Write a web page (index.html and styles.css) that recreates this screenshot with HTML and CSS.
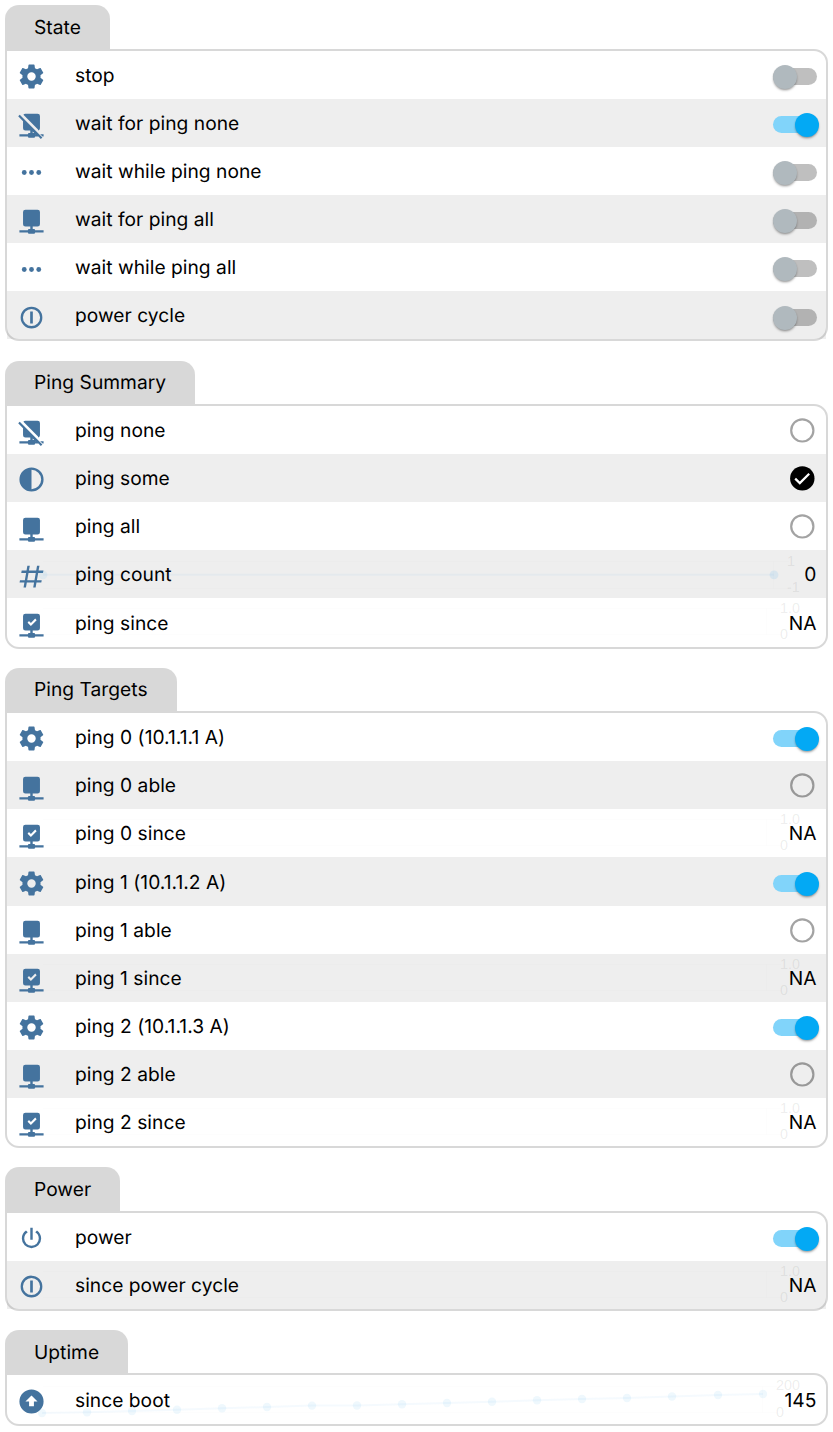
FILE: index.html
```html
<!DOCTYPE html>
<html lang="en">
<head>
<meta charset="utf-8">
<title>Ping monitor</title>
<link rel="stylesheet" href="styles.css">
</head>
<body>
<svg class="defs" aria-hidden="true">
  <symbol id="cog" viewBox="0 0 24 24"><path d="M12 15.5A3.5 3.5 0 0 1 8.5 12 3.5 3.5 0 0 1 12 8.5a3.5 3.5 0 0 1 3.5 3.5 3.5 3.5 0 0 1-3.5 3.5m7.43-2.53c.04-.32.07-.64.07-.97s-.03-.66-.07-1l2.11-1.63c.19-.15.24-.42.12-.64l-2-3.46c-.12-.22-.39-.31-.61-.22l-2.49 1c-.52-.39-1.06-.73-1.69-.98l-.37-2.65A.506.506 0 0 0 14 2h-4c-.25 0-.46.18-.5.42l-.37 2.65c-.63.25-1.17.59-1.69.98l-2.49-1c-.22-.09-.49 0-.61.22l-2 3.46c-.13.22-.07.49.12.64L4.57 11c-.04.34-.07.67-.07 1s.03.65.07.97l-2.11 1.66c-.19.15-.25.42-.12.64l2 3.46c.12.22.39.3.61.22l2.49-1.01c.52.4 1.06.74 1.69.99l.37 2.65c.04.24.25.42.5.42h4c.25 0 .46-.18.5-.42l.37-2.65c.63-.26 1.17-.59 1.69-.99l2.49 1.01c.22.08.49 0 .61-.22l2-3.46c.12-.22.07-.49-.12-.64z"/></symbol>
  <symbol id="net" viewBox="0 0 24 24"><path d="M17 3a2 2 0 0 1 2 2v10a2 2 0 0 1-2 2h-4v2h1a1 1 0 0 1 1 1h7v2h-7a1 1 0 0 1-1 1h-4a1 1 0 0 1-1-1H2v-2h7a1 1 0 0 1 1-1h1v-2H7a2 2 0 0 1-2-2V5a2 2 0 0 1 2-2z"/></symbol>
  <symbol id="net-check" viewBox="0 0 24 24"><path d="M17 3a2 2 0 0 1 2 2v10a2 2 0 0 1-2 2h-4v2h1a1 1 0 0 1 1 1h7v2h-7a1 1 0 0 1-1 1h-4a1 1 0 0 1-1-1H2v-2h7a1 1 0 0 1 1-1h1v-2H7a2 2 0 0 1-2-2V5a2 2 0 0 1 2-2zm-5.5 10.25 4.75-4.75-1.16-1.41-3.59 3.58-1.59-1.58L8.75 10.5z"/></symbol>
  <symbol id="net-off" viewBox="0 0 24 24"><path d="M1 5.27 5 9.23V15a2 2 0 0 0 2 2h4v2h-1a1 1 0 0 0-1 1H2v2h7a1 1 0 0 0 1 1h4a1 1 0 0 0 1-1h2.73l2 2L21 22.72 2.28 4zM15 20a1 1 0 0 0-1-1h-1v-1.27L15.27 20zm7 0v2h-.82l-2-2zM17.4 16.96A2 2 0 0 0 19 15V5a2 2 0 0 0-2-2H7a2 2 0 0 0-1.7.95L17.4 16.1z"/></symbol>
  <symbol id="dots" viewBox="0 0 24 24"><circle cx="6" cy="12" r="2"/><circle cx="12" cy="12" r="2"/><circle cx="18" cy="12" r="2"/></symbol>
  <symbol id="cycle" viewBox="0 0 24 24"><path d="M12 3a9 9 0 1 0 0 18 9 9 0 0 0 0-18m0 1.9a7.1 7.1 0 1 1 0 14.2 7.1 7.1 0 0 1 0-14.2M10.900 7v10h2.200V7z"/></symbol>
  <symbol id="half" viewBox="0 0 24 24"><path d="M12 2a10 10 0 1 0 0 20 10 10 0 0 0 0-20m0 2a8 8 0 0 1 0 16z"/></symbol>
  <symbol id="pound" viewBox="0 0 24 24"><path d="m5.41 21 .71-4h-4l.35-2h4l1.06-6h-4l.35-2h4l.71-4h2l-.71 4h6l.71-4h2l-.71 4h4l-.35 2h-4l-1.06 6h4l-.35 2h-4l-.71 4h-2l.71-4h-6l-.71 4zM9.53 9l-1.06 6h6l1.06-6z"/></symbol>
  <symbol id="power" viewBox="0 0 24 24"><path d="m16.56 5.44-1.45 1.45A5.97 5.97 0 0 1 18 12a6 6 0 0 1-12 0c0-2.17 1.16-4.06 2.88-5.12L7.44 5.44A7.96 7.96 0 0 0 4 12a8 8 0 0 0 16 0c0-2.72-1.36-5.12-3.44-6.56M13 3h-2v10h2z"/></symbol>
  <symbol id="up" viewBox="0 0 24 24"><path d="M2 12a10 10 0 1 1 20 0 10 10 0 0 1-20 0m8 4h4v-4h3l-5-5-5 5h3z"/></symbol>
  <symbol id="off" viewBox="0 0 26 26"><circle cx="13.3" cy="13.4" r="11.1" fill="none" stroke="#000" stroke-opacity=".36" stroke-width="2.2"/></symbol>
  <symbol id="on" viewBox="0 0 26 26"><circle cx="13.3" cy="13.4" r="12.2"/><path d="m6.2 13.6 4.6 4.5 9.4-9.4" fill="none" stroke="#fff" stroke-width="2.2"/></symbol>
  <symbol id="empty-chart" viewBox="0 0 820 48"><path class="grid" d="M36 10.5h738M36 36.5h738M759.5 10.5v26"/><text x="773" y="15">1.0</text><text x="773" y="41">0</text></symbol>
</svg>

<section class="group">
  <h2 class="tab">State</h2>
  <div class="panel">
    <div class="row"><svg class="icon"><use href="#cog"/></svg><span class="name">stop</span><i class="toggle"></i></div>
    <div class="row"><svg class="icon"><use href="#net-off"/></svg><span class="name">wait for ping none</span><i class="toggle checked"></i></div>
    <div class="row"><svg class="icon"><use href="#dots"/></svg><span class="name">wait while ping none</span><i class="toggle"></i></div>
    <div class="row"><svg class="icon"><use href="#net"/></svg><span class="name">wait for ping all</span><i class="toggle"></i></div>
    <div class="row"><svg class="icon low"><use href="#dots"/></svg><span class="name">wait while ping all</span><i class="toggle"></i></div>
    <div class="row"><svg class="icon low"><use href="#cycle"/></svg><span class="name">power cycle</span><i class="toggle low"></i></div>
  </div>
</section>

<section class="group short">
  <h2 class="tab">Ping Summary</h2>
  <div class="panel">
    <div class="row"><svg class="icon"><use href="#net-off"/></svg><span class="name">ping none</span><svg class="mark"><use href="#off"/></svg></div>
    <div class="row"><svg class="icon"><use href="#half"/></svg><span class="name">ping some</span><svg class="mark"><use href="#on"/></svg></div>
    <div class="row"><svg class="icon low"><use href="#net"/></svg><span class="name">ping all</span><svg class="mark"><use href="#off"/></svg></div>
    <div class="row">
      <svg class="chart" viewBox="0 0 820 48"><path class="grid" d="M36 11.5h746M36 38.5h746M766.5 11.5v27"/><path class="line" d="M36 24.8h731"/><circle cx="36" cy="24.8" r="4.4"/><circle class="last" cx="767" cy="24.8" r="4.4"/><text x="780" y="16">1</text><text x="780" y="42">-1</text></svg>
      <svg class="icon low"><use href="#pound"/></svg><span class="name">ping count</span><span class="value">0</span>
    </div>
    <div class="row tall"><svg class="chart"><use href="#empty-chart"/></svg><svg class="icon"><use href="#net-check"/></svg><span class="name">ping since</span><span class="value">NA</span></div>
  </div>
</section>

<section class="group short near">
  <h2 class="tab">Ping Targets</h2>
  <div class="panel">
    <div class="row"><svg class="icon"><use href="#cog"/></svg><span class="name">ping 0 (10.1.1.1 A)</span><i class="toggle checked"></i></div>
    <div class="row"><svg class="icon low"><use href="#net"/></svg><span class="name">ping 0 able</span><svg class="mark"><use href="#off"/></svg></div>
    <div class="row"><svg class="chart"><use href="#empty-chart"/></svg><svg class="icon low"><use href="#net-check"/></svg><span class="name">ping 0 since</span><span class="value">NA</span></div>
    <div class="row tall"><svg class="icon"><use href="#cog"/></svg><span class="name">ping 1 (10.1.1.2 A)</span><i class="toggle checked high"></i></div>
    <div class="row"><svg class="icon"><use href="#net"/></svg><span class="name">ping 1 able</span><svg class="mark"><use href="#off"/></svg></div>
    <div class="row"><svg class="chart"><use href="#empty-chart"/></svg><svg class="icon"><use href="#net-check"/></svg><span class="name">ping 1 since</span><span class="value">NA</span></div>
    <div class="row"><svg class="icon"><use href="#cog"/></svg><span class="name">ping 2 (10.1.1.3 A)</span><i class="toggle checked"></i></div>
    <div class="row"><svg class="icon"><use href="#net"/></svg><span class="name">ping 2 able</span><svg class="mark"><use href="#off"/></svg></div>
    <div class="row"><svg class="chart"><use href="#empty-chart"/></svg><svg class="icon"><use href="#net-check"/></svg><span class="name">ping 2 since</span><span class="value">NA</span></div>
  </div>
</section>

<section class="group near">
  <h2 class="tab">Power</h2>
  <div class="panel">
    <div class="row"><svg class="icon"><use href="#power"/></svg><span class="name">power</span><i class="toggle checked"></i></div>
    <div class="row"><svg class="chart"><use href="#empty-chart"/></svg><svg class="icon"><use href="#cycle"/></svg><span class="name">since power cycle</span><span class="value">NA</span></div>
  </div>
</section>

<section class="group short near">
  <h2 class="tab">Uptime</h2>
  <div class="panel">
    <div class="row tall">
      <svg class="chart" viewBox="0 0 820 48"><path class="grid" d="M36 11.5h734M36 37.5h734M755.5 11.5v26"/><path class="line" d="M35 38 80 37.3 125 36 170 34.7 215 33.3 260 32 305 30.6 350 30.5 395 29.3 440 28 485 26.7 530 25.3 575 24 620 23 665 21.5 711 20 756 19"/><circle cx="35" cy="38" r="4.2"/><circle cx="80" cy="37.3" r="4.2"/><circle cx="125" cy="36" r="4.2"/><circle cx="170" cy="34.7" r="4.2"/><circle cx="215" cy="33.3" r="4.2"/><circle cx="260" cy="32" r="4.2"/><circle cx="305" cy="30.6" r="4.2"/><circle cx="350" cy="30.5" r="4.2"/><circle cx="395" cy="29.3" r="4.2"/><circle cx="440" cy="28" r="4.2"/><circle cx="485" cy="26.7" r="4.2"/><circle cx="530" cy="25.3" r="4.2"/><circle cx="575" cy="24" r="4.2"/><circle cx="620" cy="23" r="4.2"/><circle cx="665" cy="21.5" r="4.2"/><circle cx="711" cy="20" r="4.2"/><circle cx="756" cy="19" r="4.2"/><text x="769" y="15">200</text><text x="769" y="41.5">0</text></svg>
      <svg class="icon"><use href="#up"/></svg><span class="name">since boot</span><span class="value">145</span>
    </div>
  </div>
</section>
</body>
</html>
```
FILE: styles.css
```css
* { box-sizing: border-box; }
body {
  margin: 0;
  padding: 5px 5px 6px;
  background: #fff;
  color: #000;
  font: 19.2px/24px Inter, sans-serif;
  letter-spacing: .03px;
  text-rendering: geometricPrecision;
}
.defs { display: none; }
.group { margin-bottom: 20px; }
.group:last-child { margin-bottom: 0; }
.near { margin-top: -1px; }
.tab {
  width: fit-content;
  height: 44px;
  margin: 0;
  padding: 10px 29px 0;
  background: rgba(127, 127, 127, .3);
  border-radius: 14px 14px 0 0;
  font-size: inherit;
  font-weight: 400;
}
.short .tab { height: 43px; padding-top: 9px; }
.short:last-child .tab { padding-top: 10px; }
.panel {
  border: 2px solid rgba(127, 127, 127, .3);
  border-radius: 0 14px 14px 14px;
  width: 823px;
}
.row {
  position: relative;
  display: flex;
  align-items: center;
  height: 48px;
  padding: 0 9.5px 0 10px;
}
.row.tall { height: 49px; padding-top: 1px; }
.row:nth-child(even) { background: rgba(127, 127, 127, .135); }
.icon {
  width: 29px;
  height: 29px;
  margin: 3px 29px 0 0;
  fill: #44739e;
}
.icon.low { margin-top: 4.5px; }
.name { flex: 1; }
.mark { width: 26px; height: 26px; margin: 0 1.5px 0 0; }
.toggle {
  position: relative;
  width: 44px;
  height: 17px;
  margin: 3px -.5px 0 0;
  border-radius: 9px;
  background: rgba(0, 0, 0, .25);
}
.toggle.low { margin-top: 5px; }
.toggle.high { margin-top: 2px; }
.toggle::after {
  content: "";
  position: absolute;
  left: 0;
  top: -3px;
  width: 24px;
  height: 24px;
  border-radius: 50%;
  background: #b0b9be;
  box-shadow: 0 2px 3px -1px rgba(0, 0, 0, .35), 0 1px 2px rgba(0, 0, 0, .15);
}
.toggle.checked { background: #81d4fa; }
.toggle.checked::after { left: 22px; background: #03a9f4; }
.chart {
  position: absolute;
  left: 0;
  top: 0;
  width: 820px;
  height: 48px;
  font: 14.4px "Liberation Sans", Arial, sans-serif;
  letter-spacing: 0;
  fill: #36a2eb;
}
.chart circle { fill-opacity: .08; }
.chart .last { fill-opacity: .12; }
.line { stroke: #36a2eb; stroke-opacity: .05; stroke-width: 2; fill: none; }
.grid { stroke: rgba(0, 0, 0, .008); fill: none; }
text { fill: rgba(90, 90, 90, .11); }
```
